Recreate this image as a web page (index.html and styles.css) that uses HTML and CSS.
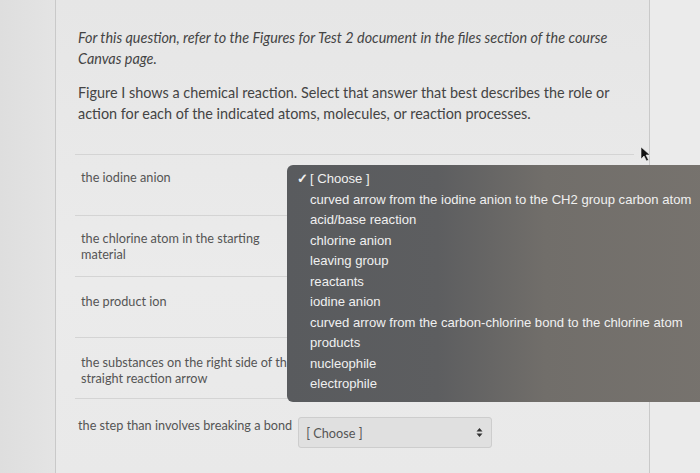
FILE: index.html
```html
<!DOCTYPE html>
<html>
<head>
<meta charset="utf-8">
<link rel="stylesheet" href="styles.css">
</head>
<body>
<div class="page">
  <div class="gutter"></div>
  <main class="card">
    <p class="q italic">For this question, refer to the Figures for Test 2 document in the files section of the course Canvas page.</p>
    <p class="q">Figure I shows a chemical reaction. Select that answer that best describes the role or action for each of the indicated atoms, molecules, or reaction processes.</p>
    <div class="rows">
      <div class="row"><div class="label">the iodine anion</div></div>
      <div class="row"><div class="label">the chlorine atom in the starting material</div></div>
      <div class="row r3"><div class="label">the product ion</div></div>
      <div class="row r4"><div class="label">the substances on the right side of the straight reaction arrow</div></div>
      <div class="row last">
        <div class="label">the step than involves breaking a bond</div>
        <div class="select">
          <span>[ Choose ]</span>
          <svg class="arrows" width="7" height="11" viewBox="0 0 7 11"><path d="M3.5 1 L6.5 4.5 H0.5 Z M3.5 10 L6.5 6.5 H0.5 Z" fill="#333"/></svg>
        </div>
      </div>
    </div>
  </main>
  <div class="right"></div>
</div>

<ul class="menu">
  <li class="sel"><span class="check">✓</span>[ Choose ]</li>
  <li>curved arrow from the iodine anion to the CH2 group carbon atom</li>
  <li>acid/base reaction</li>
  <li>chlorine anion</li>
  <li>leaving group</li>
  <li>reactants</li>
  <li>iodine anion</li>
  <li>curved arrow from the carbon-chlorine bond to the chlorine atom</li>
  <li>products</li>
  <li>nucleophile</li>
  <li>electrophile</li>
</ul>

<svg class="cursor" width="12" height="16" viewBox="0 0 12 16"><path d="M1 1 L1 13 L4 10 L6.5 15 L8.5 14 L6 9 L10 9 Z" fill="#111" stroke="#eee" stroke-width="0.6"/></svg>
</body>
</html>
```
FILE: styles.css
```css
html, body {
  margin: 0;
  padding: 0;
}
body {
  width: 700px;
  height: 473px;
  overflow: hidden;
  background: #e3e3e3;
  font-family: Lato, "Open Sans", sans-serif;
  position: relative;
}
.page {
  display: flex;
  height: 473px;
}
.gutter {
  width: 55px;
  background: linear-gradient(90deg, #dedede, #e4e4e4);
}
.card {
  width: 595px;
  border-left: 1px solid #c9c9c9;
  border-right: 1px solid #c9c9c9;
  background: linear-gradient(180deg, #e6e6e6 0%, #ebebeb 60%, #e9e9e9 100%);
  padding: 28px 15px 0 22px;
  box-sizing: border-box;
}
.right {
  flex: 1;
  background: #ebebeb;
}
.q {
  margin: 0 0 14px 0;
  font-size: 14.4px;
  line-height: 20.5px;
  color: #444;
}
.q.italic {
  font-style: italic;
}
.rows {
  margin-top: 30px;
  margin-left: -3px;
}
.row {
  border-top: 1px solid #d4d4d4;
  height: 61px;
  box-sizing: border-box;
  padding-top: 14px;
  display: flex;
  align-items: flex-start;
}
.row.r3,
.row.r4 {
  padding-top: 16px;
}
.label {
  width: 218px;
  padding-left: 6px;
  font-size: 12.7px;
  line-height: 16px;
  color: #555;
}
.row.last {
  padding-top: 18px;
}
.row.last .label {
  width: auto;
  padding-left: 3px;
}
.select {
  margin-left: 6px;
  width: 194px;
  height: 31px;
  box-sizing: border-box;
  background: #e0e0e0;
  border: 1px solid #cdcdcd;
  border-radius: 3px;
  display: flex;
  align-items: center;
  justify-content: space-between;
  padding: 0 8px 0 7px;
  font-size: 12.7px;
  color: #555;
}
.menu {
  position: absolute;
  left: 287px;
  top: 165px;
  width: 430px;
  height: 237px;
  box-sizing: border-box;
  margin: 0;
  padding: 4px 0 0 23px;
  list-style: none;
  border-radius: 6px;
  background: linear-gradient(90deg, #595b5e 0%, #5d5e60 35%, #716e6a 60%, #77736e 100%);
  font-family: "Liberation Sans", Arial, sans-serif;
  font-size: 13.1px;
  line-height: 20.5px;
  color: #f0f0f0;
}
.menu li {
  white-space: nowrap;
}
.menu .sel {
  position: relative;
}
.check {
  position: absolute;
  left: -13px;
  font-weight: bold;
}
.cursor {
  position: absolute;
  left: 640px;
  top: 146px;
}
```
